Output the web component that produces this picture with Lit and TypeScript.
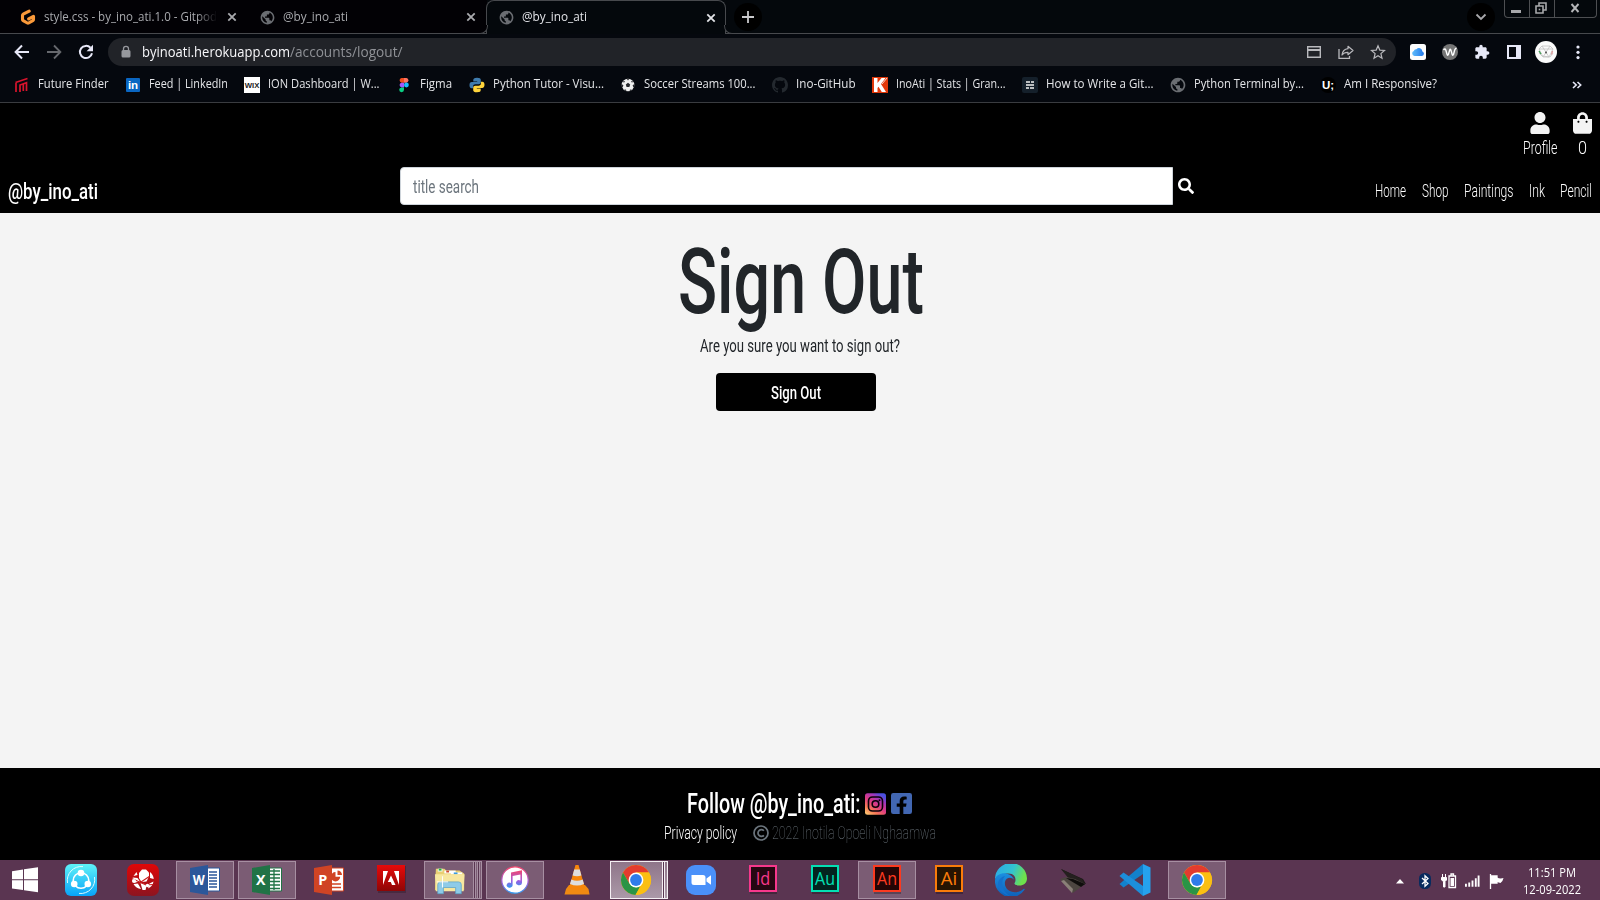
import { LitElement, html, css, svg } from "lit";
import { customElement, property, query } from "lit/decorators.js";

/** Text set to a fixed advance width by condensing or widening its glyphs. */
@customElement("fit-text")
class FitText extends LitElement {
  @property({ type: Number }) w = 0;
  @property() text = "";
  @query("span") private inner!: HTMLSpanElement;
  static styles = css`
    :host { display: inline-block; white-space: nowrap; flex: none; text-align: left; }
    span { display: inline-block; transform-origin: 0 50%; }
  `;
  updated() {
    this.style.width = `${this.w}px`;
    this.inner.style.transform = "none";
    const natural = this.inner.getBoundingClientRect().width;
    if (natural) this.inner.style.transform = `scaleX(${this.w / natural})`;
  }
  render() {
    return html`<span>${this.text}</span>`;
  }
}

const GLOBE = svg`<path fill="#6a6d72" d="M12 1C5.9 1 1 5.9 1 12s4.900 11 11 11 11-4.900 11-11S18.100 1 12 1zm-1 19.500c-4.300-.5-7.500-4-7.500-8.500 0-.6.1-1.300.2-1.900L9 15v1c0 1.100.9 2 2 2zm7-2.600c-.3-.9-1-1.500-2-1.500h-1v-3c0-.6-.4-1-1-1H8v-2h2c.6 0 1-.4 1-1V7h2c1.100 0 2-.9 2-2v-.9c3.200 1.200 5.500 4.300 5.500 7.900 0 2.300-1 4.300-2.500 5.900z"/>`;

const CHROME = svg`
  <circle cx="16" cy="16" r="15" fill="#fbbf12"/>
  <path fill="#e33b2e" d="M3 8.500A15 15 0 0 1 29 8.500H16L9.500 19.700z"/>
  <path fill="#2a9446" d="M3 8.500 9.500 19.700 16 23.500 20 22.500 15.500 31A15 15 0 0 1 3 8.500z"/>
  <path fill="#fbbf12" d="M29 8.500A15 15 0 0 1 15.500 31l7-11.500V12L16 8.500z"/>
  <circle cx="16" cy="16" r="7.400" fill="#fff"/><circle cx="16" cy="16" r="5.900" fill="#2f7bea"/>`;

const office = (c: string, letter: string, width: number, page: unknown) => svg`
  <path d="M18 4h12.500v23H18z" fill="#fff" stroke="${c}" stroke-width="1"/>${page}
  <path d="M1 4 19 1v30L1 28z" fill="${c}"/>
  <text class="ol" x="${9.8 - width / 2}" y="21.300" textLength="${width}" lengthAdjust="spacingAndGlyphs">${letter}</text>`;

const adobe = (edge: string, fill: string, letters: string, width: number) => svg`
  <path d="M3 3h27v27H3z" fill="#0004"/>
  <path d="M3 2h26v25H3z" fill="${fill}" stroke="${edge}" stroke-width="2"/>
  <text class="ad" x="${16 - width / 2}" y="20.500" textLength="${width}" lengthAdjust="spacingAndGlyphs" fill="${edge}">${letters}</text>`;

const ICONS: Record<string, [string, unknown]> = {
  globe: ["0 0 24 24", GLOBE],
  gitpod: ["0 0 16 16", svg`<path d="M9.200 2.100 3.200 5.200Q2.500 5.700 2.500 6.500v4q0 .8.7 1.200l4.100 2.300q.7.400 1.400 0l4.100-2.300q.7-.4.7-1.200V7.300L8.700 9.900" fill="none" stroke="#fb9a3a" stroke-width="3.100" stroke-linecap="round" stroke-linejoin="round"/>`],
  close: ["0 0 10 10", svg`<path d="m1.300 1.300 7.400 7.400m0-7.400-7.400 7.400" stroke="currentColor" stroke-width="1.800"/>`],
  plus: ["0 0 12 12", svg`<path d="M6 0v12M0 6h12" stroke="#c9c9cc" stroke-width="1.800"/>`],
  chevron: ["0 0 12 8", svg`<path d="m1.500 1.500 4.500 4.500 4.500-4.500" fill="none" stroke="#a9a9ac" stroke-width="1.800"/>`],
  back: ["0 0 16 16", svg`<path d="M15 8H2M8 1.500 1.600 8 8 14.500" fill="none" stroke="#e7e8f7" stroke-width="2"/>`],
  forward: ["0 0 16 16", svg`<path d="M1 8h13M8 1.500 14.400 8 8 14.500" fill="none" stroke="#66686d" stroke-width="1.800"/>`],
  reload: ["0 0 16 16", svg`<path d="M14 9.300A6.100 6.100 0 1 1 12.500 3.800" fill="none" stroke="#e7e8f7" stroke-width="2"/><path d="M15 .8v6.400H8.600z" fill="#e7e8f7"/>`],
  lock: ["0 0 12 16", svg`<path d="M3 6h6a1.500 1.500 0 0 1 1.500 1.500V12A1.500 1.500 0 0 1 9 13.500H3A1.500 1.500 0 0 1 1.500 12V7.500A1.500 1.500 0 0 1 3 6z" fill="#96989d"/><path d="M3.500 6.500V4.800a2.500 2.500 0 0 1 5 0v1.700" fill="none" stroke="#96989d" stroke-width="1.300"/>`],
  card: ["0 0 16 16", svg`<path d="M1.700 2.700h12.600v10.600H1.700zM1 5.700h14" fill="none" stroke="#b9b9bd" stroke-width="1.400"/><path d="M1.500 5h13v2h-13z" fill="#b9b9bd"/>`],
  share: ["0 0 16 16", svg`<path d="M1 5v9.300h10.500V12" fill="none" stroke="#b9b9bd" stroke-width="1.300"/><path d="M10 2.300 15 6.500l-5 4.200V8.300Q6 8.200 4 11q.8-5.800 6-6.300z" fill="none" stroke="#b9b9bd" stroke-width="1.200" stroke-linejoin="round"/>`],
  star: ["0 0 16 16", svg`<path d="m8 1.800 1.800 4.300 4.700.4-3.600 3.100 1.100 4.600L8 11.700l-4 2.500 1.100-4.600L1.500 6.500l4.700-.4z" fill="none" stroke="#b9b9bd" stroke-width="1.200"/>`],
  icloud: ["0 0 16 16", svg`<defs><linearGradient id="ic" x2="1"><stop stop-color="#5fbcfb"/><stop offset="1" stop-color="#2378ea"/></linearGradient></defs><rect width="16" height="16" rx="2.500" fill="#fdfdfd"/><path d="M4.500 12A2.600 2.600 0 0 1 3.800 7a2.400 2.400 0 0 1 2.600-1.800 3.500 3.500 0 0 1 6 2.200A2.400 2.400 0 0 1 12 12z" fill="url(#ic)"/>`],
  wext: ["0 0 16 16", svg`<circle cx="8" cy="8" r="8" fill="#757575"/><path d="M1.500 6Q3 4 3.800 6l1.300 4.500Q5.700 12 6.400 10.500L7.700 6Q8.200 4.500 8.900 6l1.300 4.500q.6 1.500 1.300 0L12.700 6Q13.300 4.500 14.500 4" fill="none" stroke="#fff" stroke-width="1.400"/>`],
  puzzle: ["0 0 24 24", svg`<path fill="#e7e8f7" d="M20.500 11H19V7c0-1.100-.9-2-2-2h-4V3.500C13 2.120 11.880 1 10.500 1S8 2.120 8 3.500V5H4c-1.100 0-1.990.9-1.990 2v3.800H3.500c1.490 0 2.700 1.210 2.700 2.700s-1.210 2.700-2.700 2.700H2V20c0 1.100.9 2 2 2h3.800v-1.500c0-1.490 1.210-2.700 2.700-2.700s2.700 1.210 2.700 2.700V22H17c1.100 0 2-.9 2-2v-4h1.500c1.380 0 2.500-1.120 2.500-2.500S21.880 11 20.500 11z"/>`],
  panel: ["0 0 16 16", svg`<path d="M1 1h14v14H1z" fill="#e7e8f7"/><path d="M3 3h7v10H3z" fill="#05080e"/>`],
  avatar: ["0 0 22 22", svg`<circle cx="11" cy="11" r="11" fill="#fbfbfb"/><path d="M4 8 7 5h8l3 3-4 8H8zM4 8l14 0M7 5l7 11M15 5 8 16M4 12l3 3 8 1 3-4" fill="none" stroke="#c2c2c2" stroke-width=".8"/><path d="m4 10 2 3" stroke="#3c9c50" stroke-width="1.300"/><path d="m17.500 10-1 3.500" stroke="#d99" stroke-width="1.300"/><circle cx="11" cy="11.500" r="1" fill="#555"/>`],
  dots: ["0 0 16 16", svg`<g fill="#e7e8f7"><circle cx="8" cy="3" r="1.600"/><circle cx="8" cy="8.300" r="1.600"/><circle cx="8" cy="13.600" r="1.600"/></g>`],
  ff: ["0 0 16 16", svg`<path d="M2 15V6M1.500 5.500 13.500 1.500M6 15V8l6.500-2.200V14M9.300 14V7" fill="none" stroke="#d8142c" stroke-width="1.700"/>`],
  linkedin: ["0 0 16 16", svg`<rect x="1" y="1" width="14" height="14" rx="1" fill="#0a66c2"/><text class="tx" x="8" y="12.300" font-size="11.500" text-anchor="middle" fill="#fff">in</text>`],
  wix: ["0 0 16 16", svg`<path d="M0 0h16v16H0z" fill="#fff"/><text class="tx" x=".7" y="10.700" font-size="7.500" textLength="14.600" lengthAdjust="spacingAndGlyphs" fill="#222">WIX</text>`],
  figma: ["0 0 16 16", svg`<path d="M8 1H5.500a2.400 2.400 0 0 0 0 4.700H8z" fill="#f24e1e"/><path d="M8 1h2.500a2.400 2.400 0 0 1 0 4.700H8z" fill="#ff7262"/><path d="M8 5.700H5.500a2.400 2.400 0 0 0 0 4.700H8z" fill="#a259ff"/><circle cx="10.400" cy="8" r="2.400" fill="#1abcfe"/><path d="M8 10.400H5.500A2.400 2.400 0 1 0 8 12.800z" fill="#0acf83"/>`],
  python: ["0 0 16 16", svg`<path d="M8 .7c-3 0-3.700 1-3.700 2.300v1.500H8.200v.6H2.800C1.300 5.100.5 6.300.5 8.200s.8 3 2.100 3h1.500V9.400c0-1.300 1-2.200 2.300-2.200h3.500c1.100 0 1.900-.8 1.900-1.900V3C11.800 1.500 10.700.7 8 .7z" fill="#3f7cae"/><path d="M8 15.300c3 0 3.700-1 3.700-2.300v-1.500H7.800v-.6h5.400c1.500 0 2.300-1.200 2.300-3.100s-.8-3-2.100-3h-1.500v1.800c0 1.300-1 2.200-2.300 2.200H6.100c-1.100 0-1.900.8-1.900 1.900V13c0 1.500 1.100 2.300 3.800 2.300z" fill="#ffd43b"/>`],
  soccer: ["0 0 16 16", svg`<circle cx="8" cy="8" r="6.300" fill="#efefef"/><g fill="#26282c"><path d="m8 5.800 2.200 1.600-.8 2.600H6.600l-.8-2.600z"/><path d="M6.500 1.500h3L8 3.500zM1.500 7l1.900 1.200L2.800 10l-1.300.2zM14.500 7l-1.900 1.200.6 1.800 1.300.2zM4 12.800l2-.2.500 2.200zM12 12.800l-2-.2-.5 2.200zM3 3.500l1.900.7-1 1.800zM13 3.500l-1.900.7 1 1.800z"/></g>`],
  github: ["0 0 16 16", svg`<path fill="#24292f" d="M8 0C3.580 0 0 3.580 0 8c0 3.540 2.290 6.530 5.470 7.590.4.070.55-.17.55-.38 0-.19-.01-.82-.01-1.490-2.010.37-2.530-.49-2.690-.94-.09-.23-.48-.94-.82-1.130-.28-.15-.68-.52-.01-.53.63-.01 1.080.58 1.230.82.72 1.210 1.870.87 2.330.66.07-.52.28-.87.51-1.070-1.780-.2-3.640-.89-3.640-3.950 0-.87.31-1.590.82-2.150-.08-.2-.36-1.020.08-2.120 0 0 .67-.21 2.200.82.64-.18 1.320-.27 2-.27s1.360.09 2 .27c1.530-1.040 2.200-.82 2.200-.82.44 1.100.16 1.920.08 2.120.51.56.82 1.270.82 2.150 0 3.070-1.870 3.750-3.650 3.950.29.25.54.73.54 1.480 0 1.070-.01 1.930-.01 2.200 0 .21.15.46.55.38A8.010 8.010 0 0 0 16 8c0-4.420-3.580-8-8-8z"/>`],
  kbm: ["0 0 16 16", svg`<path d="M0 0h16v16H0z" fill="#e2390b"/><path d="M2 1h3.500v5L9.500 1h4L9 7l5 8H9.800L6.500 9.700 5.500 11v4H2z" fill="#fff"/><path d="m15 1-5 6" stroke="#fff" stroke-width=".8"/>`],
  howto: ["0 0 16 16", svg`<rect width="16" height="16" rx="2" fill="#15202b"/><path d="M4 5h4m1 0h3M4 8h8M4 11h3m1 0h4" stroke="#f2f2f2" stroke-width="1.600"/>`],
  ui: ["0 0 16 16", svg`<circle cx="8" cy="8" r="8" fill="#000"/><text class="tx" x="8" y="12" font-size="11.500" text-anchor="middle" fill="#fff">U;</text>`],
  more: ["0 0 10 8", svg`<path d="m1 1 3.200 3L1 7m4.500-6 3.200 3-3.200 3" fill="none" stroke="#e7e8f7" stroke-width="1.600"/>`],
  user: ["0 0 448 512", svg`<path fill="#f4f4f4" d="M224 256c70.700 0 128-57.300 128-128S294.700 0 224 0 96 57.300 96 128s57.300 128 128 128zm89.600 32h-16.700c-22.200 10.200-46.900 16-72.900 16s-50.600-5.800-72.900-16h-16.700C60.200 288 0 348.200 0 422.400V464c0 26.500 21.500 48 48 48h352c26.500 0 48-21.500 48-48v-41.600c0-74.200-60.200-134.400-134.400-134.400z"/>`],
  bag: ["0 0 448 512", svg`<path fill="#f4f4f4" d="M352 160v-32C352 57.420 294.579 0 224 0 153.420 0 96 57.420 96 128v32H0v272c0 44.183 35.817 80 80 80h288c44.183 0 80-35.817 80-80V160h-96zm-192-32c0-35.290 28.710-64 64-64s64 28.710 64 64v32H160v-32zm160 120c-13.255 0-24-10.745-24-24s10.745-24 24-24 24 10.745 24 24-10.745 24-24 24zm-192 0c-13.255 0-24-10.745-24-24s10.745-24 24-24 24 10.745 24 24-10.745 24-24 24z"/>`],
  search: ["0 0 512 512", svg`<path fill="#fff" d="M505 442.700L405.300 343c-4.500-4.500-10.600-7-17-7H372c27.600-35.300 44-79.700 44-128C416 93.100 322.900 0 208 0S0 93.100 0 208s93.100 208 208 208c48.300 0 92.700-16.400 128-44v16.300c0 6.400 2.500 12.500 7 17l99.700 99.700c9.400 9.400 24.600 9.400 33.900 0l28.300-28.300c9.400-9.400 9.400-24.600.1-34zM208 336c-70.700 0-128-57.200-128-128 0-70.700 57.200-128 128-128 70.700 0 128 57.200 128 128 0 70.700-57.200 128-128 128z"/>`],
  instagram: ["0 0 21 22", svg`<defs><linearGradient id="ig" x1="0" y1="1" x2=".7" y2="0"><stop stop-color="#ffd776"/><stop offset=".28" stop-color="#f77a55"/><stop offset=".55" stop-color="#dd3a83"/><stop offset=".8" stop-color="#a336b8"/><stop offset="1" stop-color="#4a50e0"/></linearGradient></defs><rect y=".3" width="21" height="21.400" rx="2.500" fill="url(#ig)"/><rect x="3.500" y="4" width="14" height="14" rx="4" fill="none" stroke="#0a0208" stroke-width="1.600"/><circle cx="10.500" cy="11" r="3.300" fill="none" stroke="#0a0208" stroke-width="1.600"/><circle cx="14.500" cy="7.200" r="1" fill="#0a0208"/>`],
  facebook: ["0 32 448 448", svg`<path fill="#4267b2" d="M400 32H48A48 48 0 0 0 0 80v352a48 48 0 0 0 48 48h137.250V327.690h-63V256h63v-54.640c0-62.150 37-96.480 93.670-96.480 27.140 0 55.520 4.840 55.520 4.840v61h-31.270c-30.810 0-40.420 19.120-40.420 38.730V256h68.780l-11 71.690h-57.780V480H400a48 48 0 0 0 48-48V80a48 48 0 0 0-48-48z"/>`],
  copyright: ["0 0 16 16", svg`<circle cx="8" cy="8" r="7" fill="none" stroke="#6c757d" stroke-width="1.700"/><path d="M10.900 10.300a3.400 3.400 0 1 1 0-4.600" fill="none" stroke="#6c757d" stroke-width="1.700"/>`],
  start: ["0 0 26 26", svg`<path fill="#fff" d="M0 4.200 11 2.500v9.800H0zM12 2.300 26 .3v12H12zM0 13.300h11v9.800L0 21.500zM12 13.300h14v12l-14-2z"/>`],
  shareit: ["0 0 32 32", svg`<defs><linearGradient id="sh" x2="0" y2="1"><stop stop-color="#5ff2f8"/><stop offset="1" stop-color="#08a4f8"/></linearGradient></defs><rect width="32" height="32" rx="6" fill="url(#sh)"/><circle cx="16" cy="16.500" r="7.800" fill="none" stroke="#fff" stroke-width="1.600"/><g fill="#fff"><circle cx="16" cy="9" r="3.300"/><circle cx="9.200" cy="20" r="3.300"/><circle cx="22.800" cy="20" r="3.300"/></g><path d="M2.500 19A14 14 0 0 1 18 2.600M29.500 13A14 14 0 0 1 14 29.400" fill="none" stroke="#dffcff" stroke-width="1"/>`],
  redglobe: ["0 0 32 32", svg`<defs><linearGradient id="rg" x2="0" y2="1"><stop stop-color="#e10606"/><stop offset="1" stop-color="#8c1420"/></linearGradient></defs><rect width="32" height="32" rx="7" fill="url(#rg)"/><path d="M15 5.500h4l3 3v4l-2.500 5-5 .5-2.500-4v-5z" fill="#fff"/><path d="M23 8q3.500 3 3.700 7l-3.700-1zM9.500 8 6.500 12l4-1zM5.800 13.500l4.700.5 2.500 3.500-5 1-2.300-1zM6.500 20l4.500-.5 3 5.500q-5-.5-7.500-5zM13.500 19l6.500 1.500-1.500 5.500h-3zM26.500 17.500q-.8 5-5.500 7l1.500-5z" fill="#fff"/><path d="m6 15 13 6 7.500-.5M11 20l12-8" fill="none" stroke="#c9191c" stroke-width="1.100"/><g fill="#fff"><circle cx="7" cy="17" r="2"/><circle cx="20.500" cy="21.500" r="1.700"/></g>`],
  word: ["0 0 32 32", office("#2b579a", "W", 12, svg`<path d="M20 8h8m-8 3h8m-8 3h8m-8 3h8m-8 3h8m-8 3h8" stroke="#2b579a" stroke-width="1.300"/>`)],
  excel: ["0 0 32 32", office("#217346", "X", 9.5, svg`<path d="M19 7h10M19 10.500h10M19 14h10M19 17.500h10M19 21h10M19 24.500h10M23 5v21" stroke="#217346" stroke-width="1.300"/>`)],
  ppt: ["0 0 32 32", office("#d04424", "P", 9, svg`<path d="M22.500 8a4.700 4.700 0 1 0 4.700 4.700h-4.700zM24.500 6.500v4.500H29a4.500 4.500 0 0 0-4.500-4.500z" fill="#d04424"/><path d="M19 20h9m-9 3.500h9" stroke="#d04424" stroke-width="1.500"/>`)],
  acro: ["0 0 32 32", svg`<defs><linearGradient id="ac" x2="0" y2="1"><stop stop-color="#e80a0a"/><stop offset="1" stop-color="#8e0606"/></linearGradient></defs><path d="M3 2h28v27H3z" fill="#0003"/><path d="M2 1h28v26H2z" fill="url(#ac)"/><path d="M8 7h5L8 21zM24 7h-5l5 14zM16 11.500 20.500 21H17l-1.200-3h-3z" fill="#fff"/>`],
  explorer: ["0 0 34 32", svg`<path d="M2 4h9l2 2h14l5 3v18H1z" fill="#e9cf72"/><path d="M4 4h5v3H4z" fill="#f6f6f6"/><path d="M5 4h3v2H5z" fill="#21b43a"/><path d="M11 6h12v3H11z" fill="#fff"/><path d="M13 6h3v2h-3z" fill="#d04a2a"/><path d="M18 8h12v2H18z" fill="#fff"/><path d="M21 8h4v2h-4z" fill="#3a9be0"/><path d="M1 10h31.500l-1 18H2z" fill="#f7e7a0"/><path d="M4 30.500V21q0-3 3-3h19q3 0 3 3v9.500h-6V24H10v6.500z" fill="#8ecbe8" stroke="#5ba3c8" stroke-width=".8"/><path d="M9 12v12M3 18h12" stroke="#fff" stroke-width="1"/>`],
  itunes: ["0 0 32 32", svg`<defs><linearGradient id="it2" x2="0" y2="1"><stop stop-color="#f3476c"/><stop offset=".6" stop-color="#a05be0"/><stop offset="1" stop-color="#2e9cf0"/></linearGradient></defs><circle cx="16" cy="16" r="13.200" fill="#fff" stroke="url(#it2)" stroke-width="1.200"/><path d="M12 8.500 23 6.200V19a3 2.500 0 1 1-1.600-2.500V10.500l-7.800 1.600V21.200A3 2.500 0 1 1 12 19z" fill="url(#it2)"/>`],
  vlc: ["0 0 32 32", svg`<path d="M5 25 8 21h16l3.500 4 1 5.500h-25z" fill="#f08a12"/><path d="M14.500 1h3L24 24q-8 4-16 0z" fill="#f6860b"/><path d="m13.200 5.500-1.600 6q4.400 1.500 8.800 0l-1.600-6zM10.300 15.500l-1.300 4.500q7 3 14 0l-1.300-4.500q-5.700 2.500-11.400 0z" fill="#dedede"/>`],
  chrome: ["0 0 32 32", CHROME],
  zoom: ["0 0 32 32", svg`<rect x="1" y="1" width="30" height="30" rx="9" fill="#4a90f9"/><path d="M6.500 11H18q2.500 0 2.500 2.500V21H9q-2.500 0-2.500-2.500zM21.500 14.500l4.500-3.300v9.600l-4.500-3.300z" fill="#fff"/>`],
  indesign: ["0 0 32 32", adobe("#f7388c", "#260712", "Id", 14.5)],
  audition: ["0 0 32 32", adobe("#04e0b4", "#03241f", "Au", 20)],
  animate: ["0 0 32 32", adobe("#fb3a20", "#230505", "An", 20)],
  illustrator: ["0 0 32 32", adobe("#fb7c0a", "#261402", "Ai", 16.5)],
  edge: ["0 0 32 32", svg`<defs><linearGradient id="e1" x2="1" y2=".3"><stop stop-color="#2aa8e8"/><stop offset=".6" stop-color="#33c3cf"/><stop offset="1" stop-color="#6ee04c"/></linearGradient><linearGradient id="e2" x2="0" y2="1"><stop stop-color="#1b8fe0"/><stop offset="1" stop-color="#0f5fb8"/></linearGradient></defs><path d="M0 15.500A16 16 0 0 1 32 14.500c0 4.500-3.500 7-7.500 7-3.500 0-5.500-1.200-5-2.300 2-2.500 1.500-9.700-6-9.700C7 9.500 1 12 0 15.500z" fill="url(#e1)"/><path d="M0 16C1 10.500 7 8.500 12 9.700c4 1 6.500 3.500 7 6-2-3-8-3-9 2-1 6 4 10.500 10 10.500 4 0 7-1.500 8.500-3.200 1-.8 1.500 0 1 .8A16 16 0 0 1 0 16z" fill="url(#e2)"/><path d="M10 12C5 17 7 28 15 32 9 31 3 26 3 20c0-4 3-7 7-8z" fill="#1471cd"/>`],
  laptop: ["0 0 32 32", svg`<path d="m4 5 22 10 3 5-11-2z" fill="#1b1817"/><path d="m4 5 12 15 12 1-3-6z" fill="#24201e"/><path d="m3 15 13 14 12-9-10-5-9-2z" fill="#4d4641"/><path d="m9 14 15 9 4-3-12-5z" fill="#0f0d0c"/><path d="m4 17 3-1 9 9-1 4z" fill="#8a8078"/>`],
  vscode: ["0 0 32 32", svg`<path d="m24 0 7.500 3.500v25L24 32z" fill="#25a2ee"/><path d="M24 0v10L4.500 23.500.5 20z" fill="#1381cc"/><path d="M.5 12 4.500 8.500 24 22v10z" fill="#1c8fdc"/>`],
  up: ["0 0 8 5", svg`<path d="M4 0 8 4.500H0z" fill="#fff"/>`],
  bluetooth: ["0 0 12 16", svg`<rect width="12" height="16" rx="5.500" fill="#082b5e"/><path d="m3 5 6 5.500-3 2.800V2.700l3 2.800L3 11" fill="none" stroke="#fff" stroke-width="1.300"/>`],
  battery: ["0 0 16 16", svg`<path d="M8 3h6.500v11.500H8zM10 1h2.500v2H10z" fill="none" stroke="#fff" stroke-width="1.300"/><path d="M9.500 5h3.500v8H9.500z" fill="#fff"/><path d="M1.500 1v3m3-3v3M.5 4.500h5V7L4 8.500V14H2.500V8.500L.5 7z" fill="#fff" stroke="#fff" stroke-width="1"/>`],
  signal: ["0 0 16 12", svg`<path d="M0 9h2v3H0zM3.500 7.500h2V12h-2zM7 5.500h2V12H7zM10.500 3h2v9h-2zM13.500 0h2v12h-2z" fill="#fff"/>`],
  flag: ["0 0 15 15", svg`<path d="M1.500 0v15M2 2h6v7H2z" stroke="#fff" stroke-width="1.300" fill="#fff"/><path d="M8 3.500q3 1.500 6.500.5-.5 3-3 5L8 8z" fill="#fff"/>`],
};

const icon = (name: string, w = 16, h = w) =>
  html`<svg class="icon" width=${w} height=${h} viewBox=${ICONS[name][0]}>${ICONS[name][1]}</svg>`;

const fit = (text: string, w: number) => html`<fit-text .text=${text} .w=${w}></fit-text>`;

const BOOKMARKS: [string, string, number][] = [
  ["ff", "Future Finder", 70.5],
  ["linkedin", "Feed | LinkedIn", 79],
  ["wix", "ION Dashboard | W...", 111.5],
  ["figma", "Figma", 32],
  ["python", "Python Tutor - Visu...", 111],
  ["soccer", "Soccer Streams 100...", 111.5],
  ["github", "Ino-GitHub", 59.5],
  ["kbm", "InoAti | Stats | Gran...", 109.5],
  ["howto", "How to Write a Git...", 107.5],
  ["globe", "Python Terminal by...", 110],
  ["ui", "Am I Responsive?", 93],
];

const TASKS: [string, string][] = [
  ["shareit", ""], ["redglobe", ""], ["word", "open"], ["excel", "open"], ["ppt", ""],
  ["acro", ""], ["explorer", "open stack2"], ["itunes", "open"], ["vlc", ""],
  ["chrome", "open active stack1"], ["zoom", ""], ["indesign", ""], ["audition", ""],
  ["animate", "open"], ["illustrator", ""], ["edge", ""], ["laptop", ""], ["vscode", ""],
  ["chrome", "open"],
];

@customElement("app-root")
class AppRoot extends LitElement {
  static styles = css`
    :host { display: flex; flex-direction: column; width: 1600px; height: 900px; overflow: hidden; background: #f4f4f4; }
    * { box-sizing: border-box; }
    .icon { display: block; flex: none; }
    .tx { font-family: "Liberation Sans", sans-serif; font-weight: 700; }
    .ol { font: 700 15px "Open Sans", sans-serif; fill: #fff; }
    .ad { font: 400 18px "Open Sans", sans-serif; }
    .ui { font-family: "Open Sans", "Noto Sans", sans-serif; font-size: 12px; font-weight: 450; line-height: 16px; color: #e4e5e8; }

    .tabs { display: flex; height: 34px; background: #04080c; border-bottom: 1px solid #47494d; flex: none; }
    .tab { display: flex; align-items: center; height: 33px; background: #020105; color: #a9aaae; }
    .tab .icon { margin-top: 1px; }
    .tab.one { width: 248px; padding-left: 20px; }
    .tab.one::after { content: ""; width: 1px; height: 20px; margin-left: 11px; background: #4b4b50; }
    .tab.two { width: 239px; padding-left: 12px; }
    .tab.on { position: relative; width: 240px; height: 34px; padding: 0 0 1px 12px; margin-left: -1px; background: #04080c; border: 1px solid #47494d; border-bottom: 0; border-radius: 8px 8px 0 0; color: #e3e4e8; }
    .tab.on::before, .tab.on::after { content: ""; position: absolute; bottom: 0; width: 8px; height: 8px; border-bottom: 1px solid #47494d; }
    .tab.on::before { left: -8px; border-right: 1px solid #47494d; border-bottom-right-radius: 8px; background: #020105; }
    .tab.on::after { right: -8px; border-left: 1px solid #47494d; border-bottom-left-radius: 8px; background: #04080c; }
    .name { margin-left: 8px; height: 16px; }
    .name.fade { width: 173px; -webkit-mask-image: linear-gradient(90deg, #000 88%, transparent); mask-image: linear-gradient(90deg, #000 88%, transparent); }
    .x1 { margin-left: 10px; } .x2 { margin-left: 118px; } .x3 { margin-left: 119px; }
    .round { display: grid; place-items: center; width: 28px; height: 28px; border-radius: 14px; background: #000; margin-top: 3px; }
    .new { margin-left: 8px; }
    .list { margin-left: auto; }
    .win { display: flex; width: 93px; height: 18px; margin: 0 3px 0 9px; border: 1px solid #4d4f52; border-top: 0; border-radius: 0 0 4px 4px; }
    .win div { display: grid; place-items: center; width: 25px; padding: 0 2px 2px 0; border-right: 1px solid #4d4f52; }
    .win div:last-child { width: 41px; border: 0; }

    .bar { display: flex; align-items: center; gap: 16px; height: 36px; padding: 0 14px; background: #05080e; flex: none; }
    .omni { display: flex; align-items: center; width: 1288px; height: 28px; margin: 0 -2px; padding: 0 10px 0 12px; border-radius: 14px; background: #212328; font-size: 14px; line-height: 20px; color: #f8f8fb; }
    .omni .host { margin-left: 10px; }
    .omni .path { color: #8f9196; }
    .omni .acts { display: flex; gap: 16px; margin-left: auto; }
    .face { margin: 0 -3px; }

    .marks { display: flex; align-items: center; height: 33px; padding: 0 18px 3px 14px; background: #05080e; border-bottom: 1px solid #3a3c40; flex: none; }
    .mark { display: flex; align-items: center; gap: 8px; margin-right: 16.4px; }
    .mark fit-text { margin-top: -1px; }
    .marks > .icon { margin-left: auto; }

    .site { font-family: Roboto, "Open Sans", sans-serif; font-size: 18.3px; line-height: 24px; }
    header { height: 110px; background: #000; color: #fff; font-weight: 300; flex: none; }
    .account { display: flex; justify-content: flex-end; gap: 16px; height: 59px; padding: 9px 8px 0 0; }
    .account div { display: flex; flex-direction: column; align-items: center; gap: 2px; }
    .row { display: grid; grid-template-columns: 392px 773px 1fr auto; height: 51px; padding: 0 8px; }
    .brand { font-size: 22.5px; font-weight: 500; margin-top: 17px; }
    .field { height: 38px; margin-top: 5px; padding: 7px 12px; border: 1px solid #ced4da; border-radius: 4px 0 0 4px; background: #fff; color: #6c757d; font-size: 17.8px; font-weight: 400; }
    .find { margin: 16px 0 0 5px; }
    .links { display: flex; gap: 15.5px; margin-top: 17px; }

    main { flex: 1; display: flex; flex-direction: column; align-items: center; background: #f4f4f4; color: #212529; font-weight: 400; }
    h1 { margin: 21px 0 0 1px; font-size: 91px; font-weight: 500; line-height: 96px; }
    p { margin: 4px 0 0; font-size: 17.8px; }
    .out { display: grid; place-items: center; width: 160px; height: 38px; margin: 15px 8px 0 0; border: 0; border-radius: 4px; background: #000; color: #fff; font-size: 18px; font-weight: 500; font-family: inherit; }

    footer { height: 92px; padding-top: 19px; background: #000; color: #fff; flex: none; }
    .follow { display: flex; justify-content: center; align-items: center; height: 34px; padding-right: 1px; font-size: 27px; font-weight: 500; line-height: 34px; }
    .follow .icon { margin: 0 0 1px 5px; }
    .legal { display: flex; align-items: center; justify-content: center; height: 24px; font-weight: 300; }
    .legal .icon { margin: 0 3px 0 16px; }
    .legal .dim { color: #6c757d; font-weight: 250; }

    .taskbar { display: flex; align-items: center; height: 40px; background: #5a3551; flex: none; }
    .start { margin: 0 14px 0 12px; }
    .task { display: grid; place-items: center; width: 58px; height: 38px; margin-right: 4px; border: 1px solid transparent; }
    .open { background: #7b5c74; border-color: #a78fa2; }
    .active { background: linear-gradient(#8f7589, #ab99a8); border-color: #f4eff3; }
    .stack1 { padding-right: 6px; background: linear-gradient(90deg, transparent 51px, #f4eff3 51px 52px, #5a3551 52px 53px, #f4eff3 53px 54px, transparent 54px), linear-gradient(#8f7589, #ab99a8); }
    .stack2 { padding-right: 7px; background: linear-gradient(90deg, #7b5c74 48px, #a78fa2 48px 49px, #5a3551 49px 50px, #a78fa2 50px 51px, #7b5c74 51px 52px, #a78fa2 52px 53px, #5a3551 53px 54px, #a78fa2 54px 55px, #7b5c74 55px); }
    .tray { display: flex; align-items: center; gap: 10px; margin-left: auto; padding-top: 2px; }
    .tray .bt { margin-left: 5px; }
    .tray .bat { margin-right: -2px; }
    .tray .sig { margin-right: -1px; }
    .clock { display: flex; flex-direction: column; align-items: center; width: 58px; margin: 0 19px 0 9px; line-height: 17px; color: #fff; }
    .clock fit-text { height: 17px; }
  `;

  render() {
    return html`
      <div class="tabs ui">
        <div class="tab one">${icon("gitpod")}<div class="name fade">${fit("style.css - by_ino_ati.1.0 - Gitpod", 173)}</div><div class="x1">${icon("close", 10)}</div></div>
        <div class="tab two">${icon("globe", 15)}<div class="name">${fit("@by_ino_ati", 65)}</div><div class="x2">${icon("close", 10)}</div></div>
        <div class="tab on">${icon("globe", 15)}<div class="name">${fit("@by_ino_ati", 65)}</div><div class="x3">${icon("close", 10)}</div></div>
        <div class="round new">${icon("plus", 12)}</div>
        <div class="round list">${icon("chevron", 12, 8)}</div>
        <div class="win">
          <div><svg class="icon" width="12" height="12"><path d="M1 8h10v3H1z" fill="#a7a8ab"/></svg></div>
          <div><svg class="icon" width="12" height="12"><path d="M1 4h7v7H1zM4 4V1h7v7H8" fill="none" stroke="#a7a8ab" stroke-width="1.600"/><path d="M3.700 6.700h1.600v1.600H3.700z" fill="#a7a8ab"/></svg></div>
          <div><svg class="icon" width="10" height="10" viewBox="0 0 10 10"><path d="m1.500 1 7 8m0-8-7 8" stroke="#b4b5b8" stroke-width="1.900"/></svg></div>
        </div>
      </div>

      <div class="bar ui">
        ${icon("back")}${icon("forward")}${icon("reload")}
        <div class="omni">
          ${icon("lock", 12, 16)}
          <span class="host">${fit("byinoati.herokuapp.com", 148)}</span><span class="path">${fit("/accounts/logout/", 112.5)}</span>
          <div class="acts">${icon("card")}${icon("share")}${icon("star")}</div>
        </div>
        ${icon("icloud")}${icon("wext")}${icon("puzzle")}${icon("panel")}
        <div class="face">${icon("avatar", 22)}</div>
        ${icon("dots")}
      </div>

      <div class="marks ui">
        ${BOOKMARKS.map(([i, t, w]) => html`<div class="mark">${icon(i)}${fit(t, w)}</div>`)}
        ${icon("more", 10, 8)}
      </div>

      <header class="site">
        <div class="account">
          <div>${icon("user", 20, 22)}${fit("Profile", 34.5)}</div>
          <div>${icon("bag", 19, 22)}${fit("0", 9)}</div>
        </div>
        <div class="row">
          <div class="brand">${fit("@by_ino_ati", 90)}</div>
          <div class="field">${fit("title search", 66)}</div>
          <div class="find">${icon("search")}</div>
          <nav class="links">
            ${fit("Home", 31)}${fit("Shop", 26.5)}${fit("Paintings", 49.5)}${fit("Ink", 16)}${fit("Pencil", 32)}
          </nav>
        </div>
      </header>

      <main class="site">
        <h1>${fit("Sign Out", 246)}</h1>
        <p>${fit("Are you sure you want to sign out?", 200)}</p>
        <button class="out">${fit("Sign Out", 50)}</button>
      </main>

      <footer class="site">
        <div class="follow">${fit("Follow @by_ino_ati:", 173.5)}${icon("instagram", 21, 22)}${icon("facebook", 21, 21)}</div>
        <div class="legal">${fit("Privacy policy", 73)}${icon("copyright")}<span class="dim">${fit("2022 Inotila Opoeli Nghaamwa", 164)}</span></div>
      </footer>

      <div class="taskbar">
        <div class="start">${icon("start", 26)}</div>
        ${TASKS.map(([i, c]) => html`<div class="task ${c}">${icon(i, 32)}</div>`)}
        <div class="tray">
          ${icon("up", 8, 5)}
          <div class="bt">${icon("bluetooth", 12, 16)}</div>
          <div class="bat">${icon("battery")}</div>
          <div class="sig">${icon("signal", 15, 12)}</div>
          ${icon("flag", 15)}
          <div class="clock ui">${fit("11:51 PM", 48)}${fit("12-09-2022", 58)}</div>
        </div>
      </div>
    `;
  }
}
